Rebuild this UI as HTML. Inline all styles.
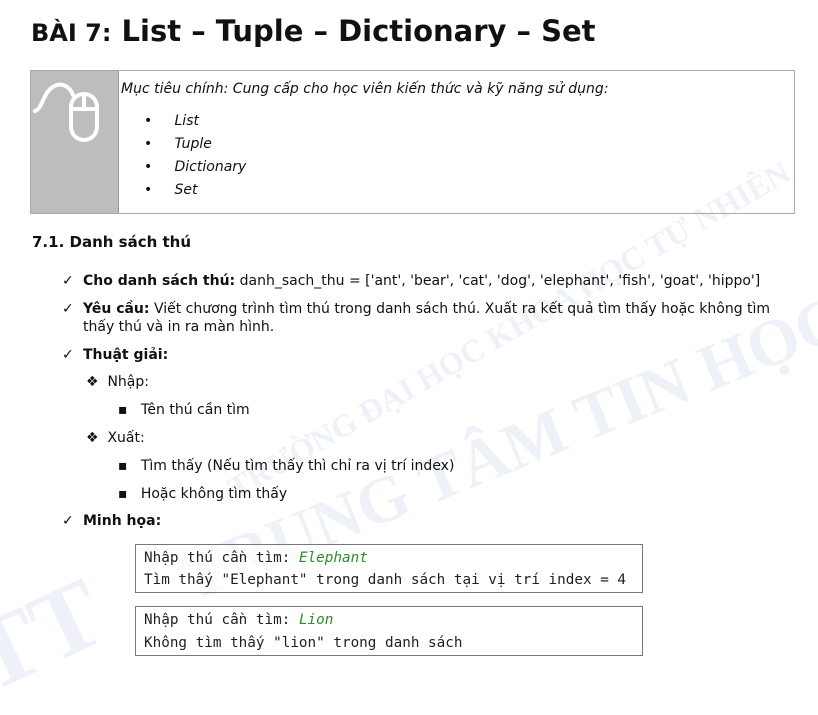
<!DOCTYPE html>
<html><head><meta charset="utf-8"><style>
body{margin:0;width:818px;height:665px;background:#fff;position:relative;overflow:hidden;font-family:"DejaVu Sans","Liberation Sans",sans-serif;color:#111;}
.a{position:absolute;white-space:nowrap;}
.t{font-size:14px;}
.wm{position:absolute;color:rgba(170,188,220,0.2);font-family:"Liberation Serif",serif;font-weight:bold;white-space:nowrap;transform-origin:left bottom;}
.code{position:absolute;left:135px;width:506px;border:1px solid #777;font-family:"DejaVu Sans Mono","Liberation Mono",monospace;font-size:14.3px;color:#222;background:rgba(255,255,255,0.6)}
.code div{position:absolute;left:8px;}
</style></head><body>
<div class="wm" style="left:240px;top:470px;font-size:32px;transform:rotate(-30deg)">TRƯỜNG ĐẠI HỌC KHOA HỌC TỰ NHIÊN</div>
<div class="wm" style="left:200px;top:540px;font-size:66px;transform:rotate(-22deg)">TRUNG TÂM TIN HỌC</div>
<div class="wm" style="left:0px;top:600px;font-size:100px;transform:rotate(-25deg)">TT</div>

<div class="a" style="left:31px;top:14px;font-size:29px;font-weight:bold;"><span style="font-size:24px">BÀI 7:</span> List – Tuple – Dictionary – Set</div>

<div style="position:absolute;left:30px;top:70px;width:763px;height:142px;border:1px solid #aaa;"></div>
<div style="position:absolute;left:31px;top:71px;width:87px;height:142px;background:#bdbdbd;border-right:1px solid #999"></div>
<svg style="position:absolute;left:31px;top:71px" width="87" height="90" viewBox="0 0 87 90"><g fill="none" stroke="#fff" stroke-width="4" stroke-linecap="round">
<path d="M4 40 C12 38 12 18 26 14 C34 12 40 18 42 24"/>
<rect x="40" y="23" width="26" height="46" rx="13"/>
<path d="M40 38 H66 M53 23 V38"/></g></svg>
<div class="a t" style="left:121px;top:81px;font-style:italic">Mục tiêu chính: Cung cấp cho học viên kiến thức và kỹ năng sử dụng:</div>
<div class="a t" style="left:144px;top:113px;font-style:italic">•&nbsp;&nbsp;&nbsp;&nbsp;&nbsp;List</div>
<div class="a t" style="left:144px;top:136px;font-style:italic">•&nbsp;&nbsp;&nbsp;&nbsp;&nbsp;Tuple</div>
<div class="a t" style="left:144px;top:159px;font-style:italic">•&nbsp;&nbsp;&nbsp;&nbsp;&nbsp;Dictionary</div>
<div class="a t" style="left:144px;top:182px;font-style:italic">•&nbsp;&nbsp;&nbsp;&nbsp;&nbsp;Set</div>

<div class="a" style="left:32px;top:233px;font-size:15px;font-weight:bold">7.1. Danh sách thú</div>

<div class="a t" style="left:62px;top:273px">✓</div>
<div class="a t" style="left:83px;top:273px"><b>Cho danh sách thú:</b> danh_sach_thu = ['ant', 'bear', 'cat', 'dog', 'elephant', 'fish', 'goat', 'hippo']</div>
<div class="a t" style="left:62px;top:301px">✓</div>
<div class="a t" style="left:83px;top:301px"><b>Yêu cầu:</b> Viết chương trình tìm thú trong danh sách thú. Xuất ra kết quả tìm thấy hoặc không tìm</div>
<div class="a t" style="left:83px;top:319px">thấy thú và in ra màn hình.</div>
<div class="a t" style="left:62px;top:347px">✓</div>
<div class="a t" style="left:83px;top:347px;font-weight:bold">Thuật giải:</div>
<div class="a t" style="left:86px;top:374px">❖&nbsp;&nbsp;Nhập:</div>
<div class="a t" style="left:118px;top:402px">▪&nbsp;&nbsp;&nbsp;Tên thú cần tìm</div>
<div class="a t" style="left:86px;top:430px">❖&nbsp;&nbsp;Xuất:</div>
<div class="a t" style="left:118px;top:458px">▪&nbsp;&nbsp;&nbsp;Tìm thấy (Nếu tìm thấy thì chỉ ra vị trí index)</div>
<div class="a t" style="left:118px;top:486px">▪&nbsp;&nbsp;&nbsp;Hoặc không tìm thấy</div>
<div class="a t" style="left:62px;top:513px">✓</div>
<div class="a t" style="left:83px;top:513px;font-weight:bold">Minh họa:</div>

<div class="code" style="top:544px;height:47px">
<div style="top:5px">Nhập thú cần tìm: <i style="color:#2e8b2e">Elephant</i></div>
<div style="top:27px">Tìm thấy "Elephant" trong danh sách tại vị trí index = 4</div></div>
<div class="code" style="top:606px;height:48px">
<div style="top:5px">Nhập thú cần tìm: <i style="color:#2e8b2e">Lion</i></div>
<div style="top:28px">Không tìm thấy "lion" trong danh sách</div></div>
</body></html>
